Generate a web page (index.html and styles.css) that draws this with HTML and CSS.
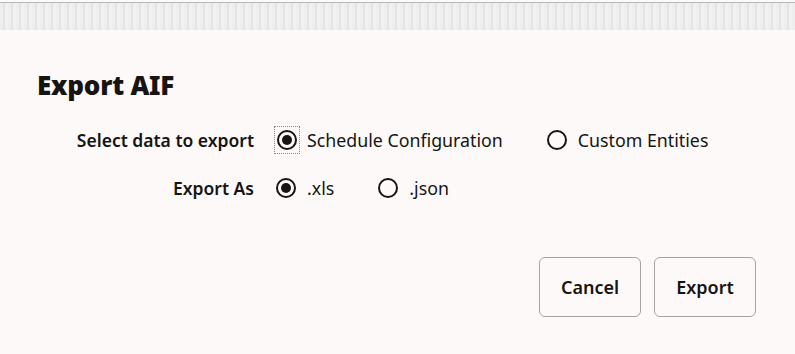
FILE: index.html
```html
<!DOCTYPE html>
<html lang="en">
<head>
  <meta charset="UTF-8" />
  <title>Export AIF</title>
  <link rel="stylesheet" href="styles.css">
</head>
<body>
  <div class="topband"></div>
  <div class="dialog">
    <h2>Export AIF</h2>
    <div class="form">
      <label class="label">Select data to export</label>
      <div class="options">
        <label class="opt"><span class="focus"><span class="radio checked"></span></span>Schedule Configuration</label>
        <label class="opt"><span class="radio"></span>Custom Entities</label>
      </div>
      <label class="label">Export As</label>
      <div class="options">
        <label class="opt"><span class="radio checked"></span>.xls</label>
        <label class="opt"><span class="radio"></span>.json</label>
      </div>
    </div>
    <div class="actions">
      <button>Cancel</button>
      <button>Export</button>
    </div>
  </div>
</body>
</html>
```

FILE: styles.css
```css
body {
  margin: 0;
  background: #fcf9f8;
  font-family: "Noto Sans", sans-serif;
  color: #161513;
}
.topband {
  height: 27px;
  border-top: 1px solid #b8b8b8;
  margin-top: 2px;
  background: repeating-linear-gradient(90deg, #eeeeee 0 3px, #e4e4e4 3px 5px, #f1f1f1 5px 8px);
}
.dialog {
  padding: 40px 39px 0 37px;
}
.dialog h2 {
  margin: 0;
  font-size: 26px;
  font-weight: 900;
  letter-spacing: -0.2px;
  line-height: 30px;
}
.form {
  display: grid;
  grid-template-columns: 217px auto;
  column-gap: 22px;
  row-gap: 16px;
  margin-top: 24px;
  align-items: center;
}
.label {
  text-align: right;
  font-size: 17.5px;
  font-weight: 600;
}
.options {
  display: flex;
  align-items: center;
  height: 32px;
}
.opt {
  display: flex;
  align-items: center;
  font-size: 17.8px;
  margin-right: 44px;
}
.radio {
  position: relative;
  width: 20px;
  height: 20px;
  border: 2px solid #161513;
  border-radius: 50%;
  margin-right: 11px;
  box-sizing: border-box;
}
.radio.checked::after {
  content: "";
  position: absolute;
  left: 3px;
  top: 3px;
  width: 10px;
  height: 10px;
  border-radius: 50%;
  background: #161513;
}
.focus {
  display: flex;
  margin: -4px 7px -4px -2px;
  padding: 3px 2px;
  border: 1px dotted #8a8886;
}
.focus .radio {
  margin-right: 0;
}
.actions {
  display: flex;
  justify-content: flex-end;
  gap: 13px;
  margin-top: 53px;
}
.actions button {
  width: 102px;
  height: 60px;
  border: 1px solid #a6a4a2;
  border-radius: 6px;
  background: #fcf9f8;
  font-family: "Noto Sans", sans-serif;
  font-size: 18px;
  font-weight: 600;
  color: #161513;
}
```
